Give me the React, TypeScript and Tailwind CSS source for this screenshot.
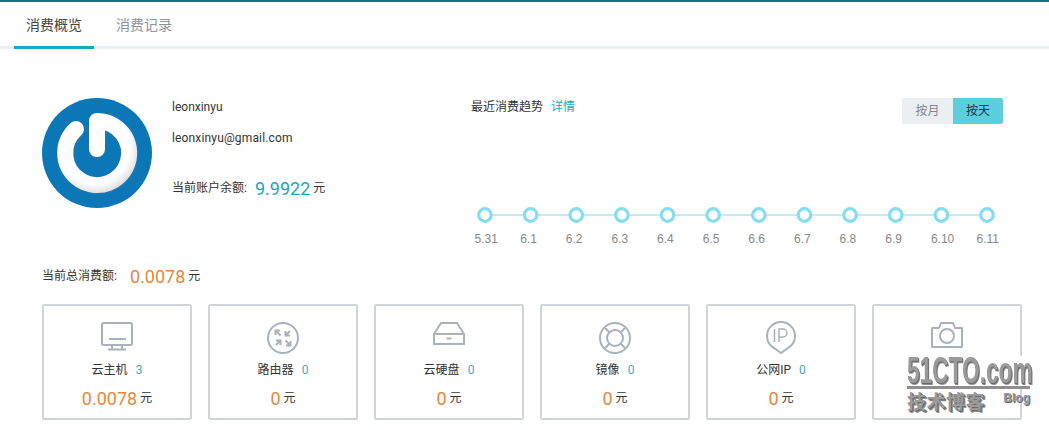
import React from "react";

const sans = "font-['Roboto','Noto_Sans_CJK_SC',sans-serif]";

function Avatar() {
  return (
    <svg width="110" height="110" viewBox="0 0 110 110" className="shrink-0">
      <defs>
        <filter id="sh" x="-20%" y="-20%" width="140%" height="140%">
          <feDropShadow dx="0.5" dy="1" stdDeviation="1" floodColor="#5f7482" floodOpacity="0.45" />
        </filter>
        <radialGradient id="ring" gradientUnits="userSpaceOnUse" cx="52" cy="50" r="46">
          <stop offset="78%" stopColor="#ffffff" />
          <stop offset="100%" stopColor="#dcdfe3" />
        </radialGradient>
      </defs>
      <circle cx="55" cy="55" r="55" fill="#0b77b7" />
      <path
        d="M34 31 A32 32 0 1 0 55 23 L55 51"
        fill="none"
        stroke="url(#ring)"
        strokeWidth="16"
        strokeLinecap="round"
        strokeLinejoin="round"
        filter="url(#sh)"
      />
    </svg>
  );
}

const ic = { fill: "none", stroke: "#a9b2bb", strokeWidth: 2 };

function Monitor() {
  return (
    <svg width="34" height="30" viewBox="0 0 34 30" {...ic}>
      <rect x="2" y="2" width="30" height="22" rx="1.5" />
      <path d="M9 18h17M12 24v4M22 24v4M8 28.5h18" />
    </svg>
  );
}
function Router() {
  return (
    <svg width="34" height="34" viewBox="0 0 34 34" {...ic}>
      <circle cx="17" cy="17" r="15" />
      <g strokeWidth="2">
        <path d="M14.5 14.5 10 10M9.5 14V9.5H14" />
        <path d="M24 10l-4.5 4.5M19.5 10v4.5H24" />
        <path d="M10 24l4.5-4.5M10 19.5h4.5V24" />
        <path d="M19.5 19.5 24 24M24.5 20v4.5H20" />
      </g>
    </svg>
  );
}
function Disk() {
  return (
    <svg width="34" height="25" viewBox="0 0 34 25" {...ic}>
      <path d="M2 13 9 2h16l7 11v10H2zM2 13h30" />
      <path d="M14.5 17.5h5" />
    </svg>
  );
}
function Mirror() {
  return (
    <svg width="34" height="34" viewBox="0 0 34 34" {...ic}>
      <circle cx="17" cy="17" r="15" />
      <circle cx="17" cy="17" r="8" />
      <path d="M7 7l4.5 4.5M27 7l-4.5 4.5M7 27l4.5-4.5M27 27l-4.5-4.5" />
    </svg>
  );
}
function Ip() {
  return (
    <svg width="32" height="34" viewBox="0 0 32 34" {...ic}>
      <path d="M16 32 6.1 24.9A14 14 0 1 1 25.9 24.9Z" strokeLinejoin="round" />
      <path d="M9.5 8v13M14 21V8h4a4 4 0 0 1 0 8h-4" strokeWidth="1.5" />
    </svg>
  );
}
function Camera() {
  return (
    <svg width="34" height="28" viewBox="0 0 34 28" {...ic}>
      <path d="M2 7h7l2-5h12l2 5h7v19H2z" strokeLinejoin="round" />
      <circle cx="17" cy="15" r="7" />
    </svg>
  );
}

const cards = [
  { icon: <Monitor />, label: "云主机", count: "3", value: "0.0078" },
  { icon: <Router />, label: "路由器", count: "0", value: "0" },
  { icon: <Disk />, label: "云硬盘", count: "0", value: "0" },
  { icon: <Mirror />, label: "镜像", count: "0", value: "0" },
  { icon: <Ip />, label: "公网IP", count: "0", value: "0" },
  { icon: <Camera />, label: "快照", count: "0", value: "0" },
];

const days = ["5.31", "6.1", "6.2", "6.3", "6.4", "6.5", "6.6", "6.7", "6.8", "6.9", "6.10", "6.11"];

function Chart() {
  const xs = days.map((_, i) => 14 + i * 45.64);
  return (
    <svg width="532" height="60" viewBox="0 0 532 60" className="mt-[76px] block">
      <line x1={xs[0]} x2={xs[11]} y1="15" y2="15" stroke="#c3eaf2" strokeWidth="2" />
      {xs.map((x, i) => (
        <g key={i}>
          <circle cx={x} cy="15" r="6.3" fill="#fff" stroke="#86dcf0" strokeWidth="3.2" />
          <text x={x - 10.5} y="43" fontSize="12" fill="#888888" fontFamily="'Liberation Sans', sans-serif">
            {days[i]}
          </text>
        </g>
      ))}
    </svg>
  );
}

export default function App() {
  return (
    <div className={`relative h-[430px] w-[1049px] overflow-hidden bg-white text-[12px] text-[#333] ${sans}`}>
      <div className="h-[2px] bg-[#07787f]" />
      <div className="flex h-[47px] border-b-[3px] border-[#ebeff2] pl-[14px]">
        <div className="flex h-[47px] w-[80px] items-center justify-center border-b-[3px] border-[#18a9bf] pt-[3px] text-[14px] text-[#444]">
          消费概览
        </div>
        <div className="ml-[10px] flex h-[44px] w-[80px] items-center justify-center pt-[3px] text-[14px] text-[#8b949c]">
          消费记录
        </div>
      </div>

      <div className="flex pl-[42px] pt-[49px]">
        <Avatar />
        <div className="ml-[20px] w-[299px] pt-[1px]">
          <div className="h-[16px] leading-[16px]">leonxinyu</div>
          <div className="mt-[15px] h-[16px] leading-[16px] tracking-[0.15px]">leonxinyu@gmail.com</div>
          <div className="mt-[30px] flex h-[24px] items-center">
            <span>当前账户余额:</span>
            <span className="ml-[8px] text-[18px] text-[#1ea5bb]">9.9922</span>
            <span className="ml-[3px]">元</span>
          </div>
        </div>
        <div className="w-[532px]">
          <div className="flex items-start justify-between">
            <div className="flex h-[18px] items-center">
              <span>最近消费趋势</span>
              <span className="ml-[8px] text-[#1ea5bb]">详情</span>
            </div>
            <div className="flex h-[26px] w-[101px] overflow-hidden rounded-[2px]">
              <div className="flex w-[51px] items-center justify-center bg-[#ebeff2] text-[#7f8890]">按月</div>
              <div className="flex w-[50px] items-center justify-center bg-[#5bcfe0] text-[#24333a]">按天</div>
            </div>
          </div>
          <Chart />
        </div>
      </div>

      <div className="ml-[42px] mt-[4px] flex h-[24px] items-center">
        <span>当前总消费额:</span>
        <span className="ml-[13px] text-[18px] text-[#e8873a]">0.0078</span>
        <span className="ml-[3px]">元</span>
      </div>

      <div className="ml-[42px] mt-[16px] flex gap-[16px]">
        {cards.map((c) => (
          <div key={c.label} className="flex h-[116px] w-[150px] flex-col items-center rounded-[2px] border-2 border-[#d0d5da]">
            <div className="mt-[15px] flex h-[37px] w-full items-start justify-center">{c.icon}</div>
            <div className="mt-[3px] flex h-[18px] items-center">
              <span>{c.label}</span>
              <span className="ml-[8px] text-[#3fa9bd]">{c.count}</span>
            </div>
            <div className="mt-[7px] flex h-[24px] items-center">
              <span className="text-[18px] text-[#e8873a]">{c.value}</span>
              <span className="ml-[3px]">元</span>
            </div>
          </div>
        ))}
      </div>

      <div className="absolute left-[907px] top-[356px] w-[123px] text-[#9b9b9b] [text-shadow:1px_1px_0_#6a6a6a,2px_2px_0_#8f8f8f]">
        <div className="h-[33px] w-[123px] border-b-[3px] border-[#8f8f8f] bg-white">
          <div className="w-[123px] origin-left scale-x-[0.63] whitespace-nowrap font-['Liberation_Sans',sans-serif] text-[36px] font-bold leading-[30px]">
            51CTO.com
          </div>
        </div>
        <div className="flex items-start justify-between pt-[2px]">
          <span className="bg-white text-[19px] font-bold leading-[24px] tracking-[0.5px]">技术博客</span>
          <span className="font-['Liberation_Sans',sans-serif] text-[12px] font-bold leading-[14px] [text-shadow:1px_1px_0_#6a6a6a]">Blog</span>
        </div>
      </div>
    </div>
  );
}
